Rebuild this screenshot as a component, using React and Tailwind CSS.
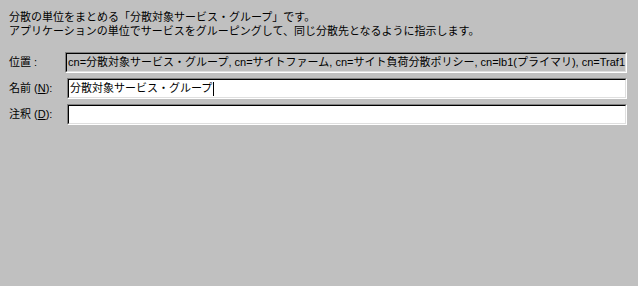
import React from "react";

const font = { fontFamily: '"Liberation Sans", "Noto Sans CJK JP", sans-serif' };

function Field({ children, white }) {
  return (
    <div className="flex-1 h-[21px] border border-t-[#808080] border-l-[#808080] border-b-white border-r-white">
      <div
        className={`h-full border border-t-black border-l-black border-b-[#dfdfdf] border-r-[#dfdfdf] overflow-hidden whitespace-nowrap flex items-center pl-[1px] text-[11px] text-black ${
          white ? "bg-white" : "bg-[#c0c0c0]"
        }`}
      >
        {children}
      </div>
    </div>
  );
}

function Row({ label, children }) {
  return (
    <div className="flex items-center">
      <div className="w-[58px] text-[11px] text-black">{label}</div>
      {children}
    </div>
  );
}

export default function App() {
  return (
    <div className="w-[638px] h-[286px] bg-[#c0c0c0] pl-[9px] pr-[11px] pt-[10px]" style={font}>
      <div className="text-[11px] leading-[14px] text-black">
        <div>分散の単位をまとめる「分散対象サービス・グループ」です。</div>
        <div>アプリケーションの単位でサービスをグルーピングして、同じ分散先となるように指示します。</div>
      </div>
      <div className="mt-[14px] flex flex-col gap-[5px]">
        <Row label="位置 :">
          <Field>
            cn=分散対象サービス・グループ, cn=サイトファーム, cn=サイト負荷分散ポリシー, cn=lb1(プライマリ), cn=Traf1
          </Field>
        </Row>
        <Row
          label={
            <span>
              名前 (<span className="underline">N</span>):
            </span>
          }
        >
          <Field white>
            分散対象サービス・グループ
            <span className="inline-block w-px h-[14px] bg-black ml-[1px]" />
          </Field>
        </Row>
        <Row
          label={
            <span>
              注釈 (<span className="underline">D</span>):
            </span>
          }
        >
          <Field white />
        </Row>
      </div>
    </div>
  );
}
